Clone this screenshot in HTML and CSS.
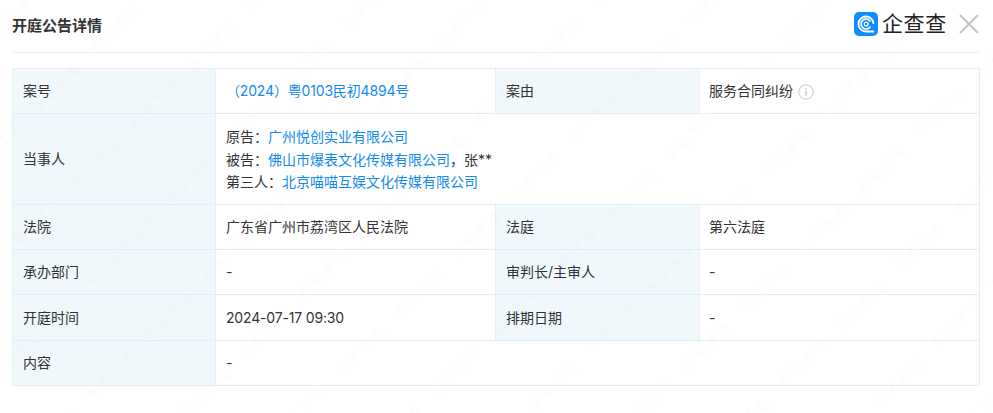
FILE: index.html
```html
<!DOCTYPE html>
<html lang="zh-CN">
<head>
<meta charset="utf-8">
<title>开庭公告详情</title>
<link rel="stylesheet" href="styles.css">
</head>
<body>
<header class="head">
  <h1 class="title">开庭公告详情</h1>
  <div class="brand">
    <svg class="logo" width="24" height="24" viewBox="0 0 24 24">
      <rect width="24" height="24" rx="5" fill="#0f8cff"/>
      <path d="M19.5 12a7.5 7.5 0 1 0-7.5 7.5h8" fill="none" stroke="#fff" stroke-width="1.8"/>
      <path d="M16.4 9.5a5 5 0 1 0 0 5" fill="none" stroke="#fff" stroke-width="1.6"/>
      <circle cx="12.2" cy="12" r="1.9" fill="none" stroke="#fff" stroke-width="1.3"/>
    </svg>
    <span class="brand-name">企查查</span>
    <svg class="close" width="20" height="20" viewBox="0 0 20 20">
      <path d="M1 1l18 18M19 1L1 19" stroke="#c4c4c4" stroke-width="2.2" fill="none"/>
    </svg>
  </div>
</header>
<table class="detail">
  <colgroup><col class="c1"><col class="c2"><col class="c3"><col class="c4"></colgroup>
  <tr class="r45">
    <th>案号</th>
    <td class="num"><a class="link">（2024）粤0103民初4894号</a></td>
    <th>案由</th>
    <td class="last">服务合同纠纷<svg class="info" width="16" height="16" viewBox="0 0 16 16"><circle cx="8" cy="8" r="7.2" fill="none" stroke="#d6d6d6" stroke-width="1.2"/><path d="M8 6.8v5M8 4v1.6" stroke="#c8c8c8" stroke-width="1.4" fill="none"/></svg></td>
  </tr>
  <tr>
    <th>当事人</th>
    <td colspan="3" class="parties">
      <div>原告：<a class="link">广州悦创实业有限公司</a></div>
      <div>被告：<a class="link">佛山市爆表文化传媒有限公司</a>，张**</div>
      <div>第三人：<a class="link">北京喵喵互娱文化传媒有限公司</a></div>
    </td>
  </tr>
  <tr class="r45">
    <th>法院</th><td>广东省广州市荔湾区人民法院</td>
    <th>法庭</th><td class="last">第六法庭</td>
  </tr>
  <tr class="r45">
    <th>承办部门</th><td>-</td>
    <th>审判长/主审人</th><td class="last">-</td>
  </tr>
  <tr class="r45">
    <th>开庭时间</th><td class="num">2024-07-17 09:30</td>
    <th>排期日期</th><td class="last">-</td>
  </tr>
  <tr class="r45">
    <th>内容</th><td colspan="3">-</td>
  </tr>
</table>
<svg class="watermark" width="993" height="413" aria-hidden="true">
  <defs>
    <pattern id="wm" width="165.5" height="481.8" patternUnits="userSpaceOnUse" patternTransform="rotate(-45)">
      <text class="wm-text" x="5.5" y="187">EET5 SVMQ</text>
      <text class="wm-text" x="-160" y="187">EET5 SVMQ</text>
      <text class="wm-text" x="143" y="267.3">EET5 SVMQ</text>
      <text class="wm-text" x="-22.5" y="267.3">EET5 SVMQ</text>
      <text class="wm-text" x="115" y="347.6">EET5 SVMQ</text>
      <text class="wm-text" x="-50.5" y="347.6">EET5 SVMQ</text>
      <text class="wm-text" x="87" y="427.9">EET5 SVMQ</text>
      <text class="wm-text" x="-78.5" y="427.9">EET5 SVMQ</text>
      <text class="wm-text" x="59" y="26.4">EET5 SVMQ</text>
      <text class="wm-text" x="-106.5" y="26.4">EET5 SVMQ</text>
      <text class="wm-text" x="31" y="106.7">EET5 SVMQ</text>
      <text class="wm-text" x="-134.5" y="106.7">EET5 SVMQ</text>
    </pattern>
  </defs>
  <rect class="wm-fill" width="993" height="413"/>
</svg>
</body>
</html>
```
FILE: styles.css
```css
* { box-sizing: border-box; }
html, body { margin: 0; background: #fff; }
body {
  padding: 0 13px 0 12px;
  font-family: "Inter", "Noto Sans CJK SC", sans-serif;
  font-size: 14px;
  color: #333;
  overflow: hidden;
}
.head {
  height: 53px;
  display: flex;
  align-items: center;
  justify-content: space-between;
  border-bottom: 1px solid #eee;
  padding-bottom: 4px;
}
.title { margin: 0; font-size: 15px; font-weight: 700; color: #333; }
.brand { display: flex; align-items: center; margin-right: 1px; }
.logo { display: block; }
.brand-name { margin-left: 4px; font-size: 21px; line-height: 26px; color: #222; width: 66px; white-space: nowrap; letter-spacing: 0.6px; }
.close { display: block; margin-left: 11px; }
.detail {
  width: 967px;
  margin-top: 15px;
  border-collapse: collapse;
  table-layout: fixed;
  line-height: 22px;
}
.c1 { width: 203px; }
.c2 { width: 280px; }
.c3 { width: 204px; }
.c4 { width: 280px; }
.detail th, .detail td { border: 1px solid #e4eef6; padding: 0 10px; text-align: left; font-weight: 400; }
.detail th { background: #f0f8fc; }
.detail .last { padding-left: 9px; }
.r45 { height: 45.3px; }
.detail .parties { padding-top: 12px; padding-bottom: 10px; }
.parties div { height: 22.5px; }
.link { color: #128bed; }
.num { letter-spacing: -0.17px; }
.info { vertical-align: -4px; margin-left: 5px; }
.watermark { position: absolute; left: 0; top: 0; pointer-events: none; }
.wm-fill { fill: url(#wm); }
.wm-text {
  font-family: "Liberation Mono", monospace;
  font-size: 15px;
  font-weight: 700;
  letter-spacing: 7.5px;
  fill: #000;
  fill-opacity: 0.012;
}
```
